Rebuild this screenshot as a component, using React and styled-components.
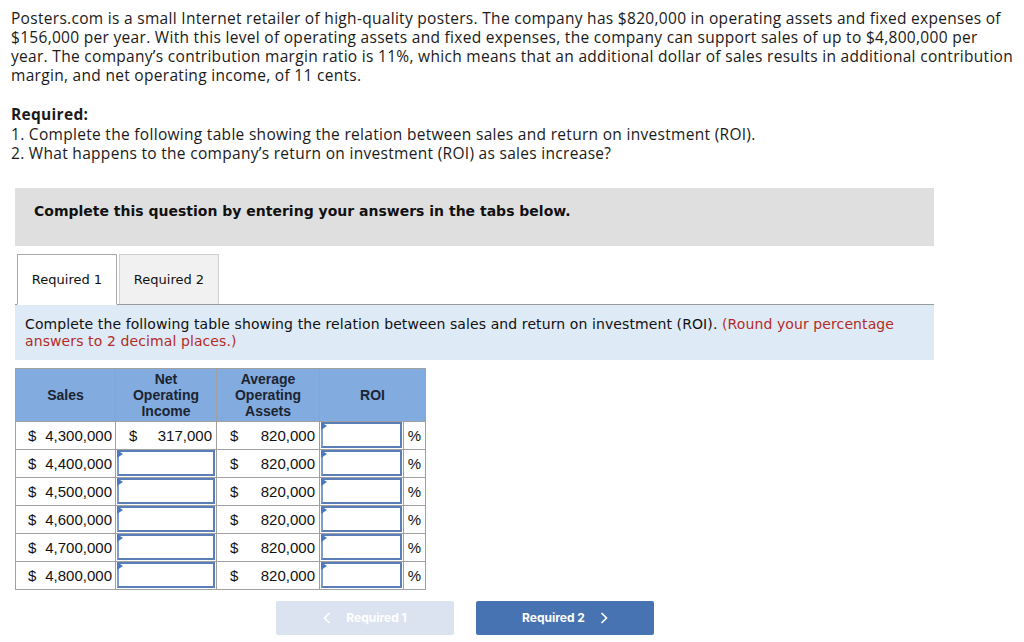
import React from 'react';
import styled, { createGlobalStyle } from 'styled-components';

const GlobalStyle = createGlobalStyle`
  body {
    margin: 0;
    background: #fff;
    color: #1a1a1a;
    font-family: 'Open Sans', 'Liberation Sans', sans-serif;
  }
`;

const Page = styled.div`
  width: 1024px;
  padding: 9px 0 0 11px;
  box-sizing: border-box;
`;

const Intro = styled.p`
  margin: 0;
  width: 1004px;
  font-size: 15.5px;
  letter-spacing: 0.3px;
  line-height: 19px;
`;

const Required = styled.div`
  margin-top: 20px;
  font-size: 15.5px;
  letter-spacing: 0.3px;
  line-height: 19.5px;

  strong {
    font-weight: 700;
  }
`;

const Panel = styled.div`
  width: 919px;
  margin: 24px 0 0 4px;
`;

const Banner = styled.div`
  height: 58px;
  box-sizing: border-box;
  padding: 15px 19px 0;
  background: #dfdfdf;
  font-family: 'DejaVu Sans', Verdana, sans-serif;
  font-weight: 700;
  font-size: 14px;
  color: #111;
`;

const TabBar = styled.div`
  display: flex;
  align-items: flex-end;
  gap: 2px;
  margin-top: 8px;
  padding-left: 2px;
  border-bottom: 1px solid #9a9a9a;
`;

const Tab = styled.div`
  width: 100px;
  height: ${({ $active }) => ($active ? '51px' : '50px')};
  box-sizing: border-box;
  display: flex;
  align-items: center;
  justify-content: center;
  margin-bottom: ${({ $active }) => ($active ? '-1px' : '0')};
  background: ${({ $active }) => ($active ? '#fff' : '#f1f1f1')};
  border: 1px solid ${({ $active }) => ($active ? '#a8a8a8' : '#cfcfcf')};
  border-bottom: ${({ $active }) => ($active ? '1px solid #fff' : 'none')};
  font-family: 'DejaVu Sans', Verdana, sans-serif;
  font-size: 13px;
  color: #111;
`;

const Info = styled.div`
  height: 55px;
  box-sizing: border-box;
  padding: 11px 10px 0;
  background: #deeaf6;
  font-family: 'DejaVu Sans', Verdana, sans-serif;
  font-size: 14px;
  letter-spacing: 0.1px;
  line-height: 17px;
  color: #111;
`;

const Note = styled.span`
  color: #b22c27;
`;

const Table = styled.table`
  margin-top: 8px;
  border-collapse: collapse;
  font-family: 'Liberation Sans', Arial, sans-serif;
  color: #111;

  th, td {
    border: 1px solid #a0a0a0;
    padding: 0;
  }
`;

const Head = styled.th`
  width: ${({ $w }) => $w}px;
  height: 52px;
  background: #82abe0;
  font-size: 14px;
  font-weight: 700;
  line-height: 16px;
  color: #1c2430;
`;

const Cell = styled.td`
  height: 27px;
  font-size: 15px;
`;

const Money = styled.div`
  display: flex;
  justify-content: space-between;
  padding: ${({ $left }) => ($left ? '0 3px 0 12px' : '0 4px 0 13px')};
`;

const Percent = styled.td`
  width: 21px;
  font-size: 15px;
  text-align: center;
`;

const Field = styled.div`
  position: relative;
  height: 26px;
  margin: 0 1px;
  border: 2px solid #5a7fb8;
  border-left-color: #7e9dcb;
  box-sizing: border-box;
  background: #fff;

  &::before {
    content: '';
    position: absolute;
    top: -2px;
    left: -2px;
    border-top: 4px solid transparent;
    border-bottom: 4px solid transparent;
    border-left: 6px solid #4a78c0;
  }
`;

const Buttons = styled.div`
  display: flex;
  justify-content: center;
  gap: 22px;
  margin-top: 11px;
  padding-right: 19px;
`;

const NavButton = styled.div`
  width: 178px;
  height: 34px;
  display: flex;
  align-items: center;
  justify-content: center;
  gap: 15px;
  border-radius: 2px;
  background: ${({ $disabled }) => ($disabled ? '#dae3ef' : '#4873b3')};
  color: #fff;
  font-family: 'Inter', 'Lato', sans-serif;
  font-weight: 700;
  font-size: 12px;
`;

const Chevron = ({ dir }) => (
  <svg width="8" height="12" viewBox="0 0 8 12">
    <path
      d={dir === 'left' ? 'M6.5 1 L1.5 6 L6.5 11' : 'M1.5 1 L6.5 6 L1.5 11'}
      fill="none"
      stroke="#fff"
      strokeWidth="1.6"
    />
  </svg>
);

const sales = ['4,300,000', '4,400,000', '4,500,000', '4,600,000', '4,700,000', '4,800,000'];

export default function App() {
  return (
    <Page>
      <GlobalStyle />
      <Intro>
        Posters.com is a small Internet retailer of high-quality posters. The company has $820,000 in operating
        assets and fixed expenses of $156,000 per year. With this level of operating assets and fixed expenses,
        the company can support sales of up to $4,800,000 per year. The company’s contribution margin ratio is
        11%, which means that an additional dollar of sales results in additional contribution margin, and net
        operating income, of 11 cents.
      </Intro>
      <Required>
        <strong>Required:</strong>
        <div>1. Complete the following table showing the relation between sales and return on investment (ROI).</div>
        <div>2. What happens to the company’s return on investment (ROI) as sales increase?</div>
      </Required>

      <Panel>
        <Banner>Complete this question by entering your answers in the tabs below.</Banner>
        <TabBar>
          <Tab $active>Required 1</Tab>
          <Tab>Required 2</Tab>
        </TabBar>
        <Info>
          Complete the following table showing the relation between sales and return on investment (ROI).{' '}
          <Note>(Round your percentage answers to 2 decimal places.)</Note>
        </Info>

        <Table>
          <thead>
            <tr>
              <Head $w={99}>Sales</Head>
              <Head $w={100}>Net<br />Operating<br />Income</Head>
              <Head $w={102}>Average<br />Operating<br />Assets</Head>
              <Head $w={105} colSpan={2}>ROI</Head>
            </tr>
          </thead>
          <tbody>
            {sales.map((s, i) => (
              <tr key={s}>
                <Cell><Money $left><span>$</span><span>{s}</span></Money></Cell>
                {i === 0 ? (
                  <Cell><Money><span>$</span><span>317,000</span></Money></Cell>
                ) : (
                  <Cell><Field /></Cell>
                )}
                <Cell><Money><span>$</span><span>820,000</span></Money></Cell>
                <Cell style={{ width: 83 }}><Field /></Cell>
                <Percent>%</Percent>
              </tr>
            ))}
          </tbody>
        </Table>

        <Buttons>
          <NavButton $disabled><Chevron dir="left" />Required 1</NavButton>
          <NavButton>Required 2<Chevron dir="right" /></NavButton>
        </Buttons>
      </Panel>
    </Page>
  );
}
